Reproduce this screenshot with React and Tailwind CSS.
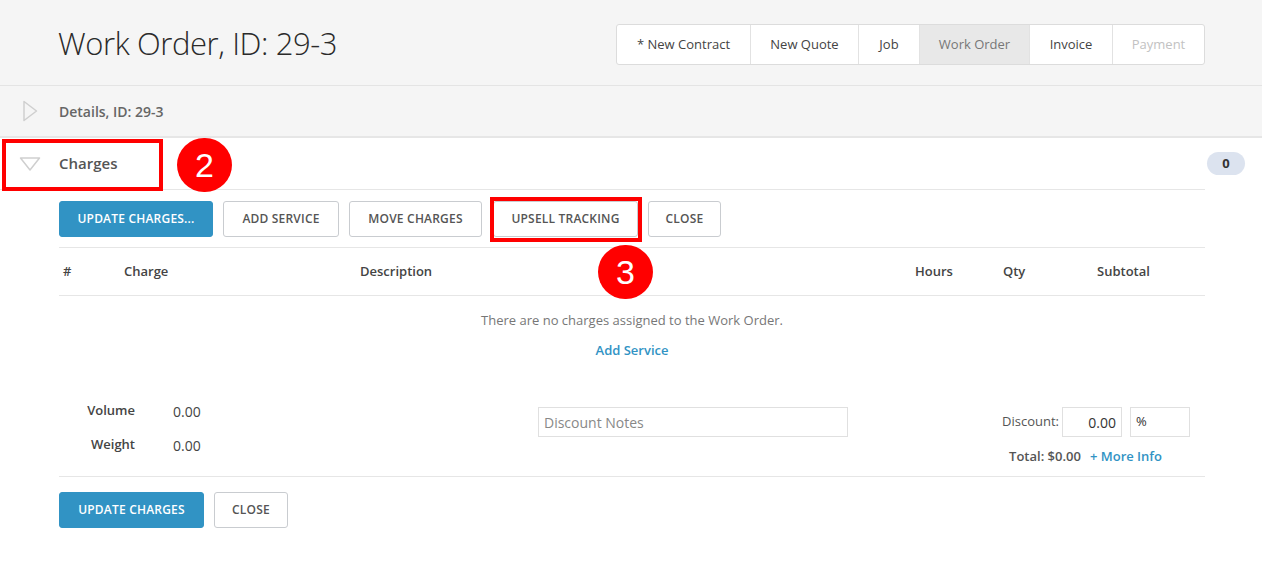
import React from "react";

const font = { fontFamily: '"Open Sans", "Liberation Sans", sans-serif' };

function Btn({ children, primary, className = "" }) {
  return (
    <button
      className={
        "h-9 rounded-[3px] px-4 text-[12px] font-semibold uppercase tracking-[0.2px] " +
        (primary
          ? "bg-[#3193c4] text-white border border-[#3193c4] "
          : "bg-white text-[#555] border border-[#c9ccd0] ") +
        className
      }
    >
      {children}
    </button>
  );
}

function Tab({ children, active, disabled, w }) {
  return (
    <div
      className={
        "flex items-center justify-center border-l border-[#e2e2e2] first:border-l-0 text-[13px] " +
        w +
        (active ? " bg-[#e8e8e8] text-[#777]" : disabled ? " text-[#c2c2c2]" : " text-[#444]")
      }
    >
      {children}
    </div>
  );
}

export default function App() {
  return (
    <div className="relative w-[1262px] h-[572px] bg-white text-[#444]" style={font}>
      {/* header */}
      <div className="h-[86px] bg-[#f5f5f5] border-b border-[#e4e4e4] flex items-center justify-between pl-[58px] pr-[57px]">
        <h1 className="text-[31px] font-light text-[#2a2a2a] tracking-[-0.4px] mt-[2px]">Work Order, ID: 29-3</h1>
        <div className="flex h-[41px] mt-[4px] bg-white border border-[#dcdcdc] rounded-[3px] overflow-hidden">
          <Tab w="w-[133px]">* New Contract</Tab>
          <Tab w="w-[108px]">New Quote</Tab>
          <Tab w="w-[61px]">Job</Tab>
          <Tab w="w-[110px]" active>Work Order</Tab>
          <Tab w="w-[83px]">Invoice</Tab>
          <Tab w="w-[92px]" disabled>Payment</Tab>
        </div>
      </div>

      {/* details row */}
      <div className="h-[52px] bg-[#f5f5f5] border-b-2 border-[#e6e6e6] flex items-center">
        <div className="w-[59px] flex justify-center pl-[1px]">
          <svg width="16" height="22" viewBox="0 0 16 22">
            <path d="M2 1.5 L14.5 11 L2 20.5 Z" fill="none" stroke="#cfcfcf" strokeWidth="1.5" strokeLinejoin="round" />
          </svg>
        </div>
        <span className="text-[14px] font-semibold text-[#666]">Details, ID: 29-3</span>
      </div>

      {/* charges row */}
      <div className="pr-[57px]">
        <div className="h-[52px] flex items-center border-b border-[#e6e6e6]">
          <div className="w-[59px] flex justify-center">
            <svg width="22" height="16" viewBox="0 0 22 16">
              <path d="M1.5 2 L20.5 2 L11 14 Z" fill="none" stroke="#cfcfcf" strokeWidth="1.5" strokeLinejoin="round" />
            </svg>
          </div>
          <span className="text-[15px] font-semibold text-[#555] flex-1">Charges</span>
          <span className="h-[23px] w-[38px] rounded-full bg-[#dce3ef] flex items-center justify-center text-[13px] font-bold text-[#333] mr-[-40px]">0</span>
        </div>
      </div>

      <div className="pl-[59px] pr-[57px]">
        <div className="flex gap-[10px] py-[10px] border-b border-[#e6e6e6] h-[58px] items-center">
          <Btn primary className="w-[154px] px-0">Update Charges...</Btn>
          <Btn className="w-[116px] px-0">Add Service</Btn>
          <Btn className="w-[133px] px-0">Move Charges</Btn>
          <Btn className="w-[145px] px-0 ml-[1px]">Upsell Tracking</Btn>
          <Btn className="w-[73px] px-0">Close</Btn>
        </div>

        {/* table header */}
        <div className="h-[48px] flex items-center border-b border-[#e6e6e6] text-[13px] font-semibold text-[#444]">
          <span className="w-[65px] pl-[4px]">#</span>
          <span className="w-[236px]">Charge</span>
          <span className="w-[555px]">Description</span>
          <span className="w-[88px]">Hours</span>
          <span className="w-[94px]">Qty</span>
          <span>Subtotal</span>
        </div>

        {/* empty */}
        <div className="flex flex-col items-center pt-[15px] h-[96px]">
          <p className="text-[13px] text-[#777] leading-[18px]">There are no charges assigned to the Work Order.</p>
          <a className="text-[13px] font-semibold text-[#3193c4] mt-[12px] leading-[18px]">Add Service</a>
        </div>

        {/* footer totals */}
        <div className="flex border-b border-[#e6e6e6] h-[85px]">
          <div className="w-[300px] pt-[10px] text-[13px]">
            <div className="flex items-center h-[18px]">
              <span className="w-[114px] text-right pr-[38px] font-semibold text-[#444]">Volume</span>
              <span className="text-[14px] text-[#444]">0.00</span>
            </div>
            <div className="flex items-center h-[18px] mt-[16px]">
              <span className="w-[114px] text-right pr-[38px] font-semibold text-[#444]">Weight</span>
              <span className="text-[14px] text-[#444]">0.00</span>
            </div>
          </div>
          <div className="w-[489px] pl-[179px] pt-[15px]">
            <div className="h-[30px] w-[310px] border border-[#e0e0e0] flex items-center px-[5px] text-[14px] text-[#888]">Discount Notes</div>
          </div>
          <div className="flex-1 flex flex-col items-end pr-[15px] pt-[15px]">
            <div className="flex items-center gap-[3px] text-[13px]">
              <span className="text-[#555]">Discount:</span>
              <span className="h-[30px] w-[60px] border border-[#e0e0e0] flex items-center justify-end pr-[5px] text-[14px] text-[#333]">0.00</span>
              <span className="h-[30px] w-[60px] border border-[#e0e0e0] flex items-center pl-[5px] text-[13px] text-[#333] ml-[5px]">%</span>
            </div>
            <div className="flex items-center gap-[9px] mt-[10px] text-[13px] font-semibold mr-[28px]">
              <span className="text-[#555]">Total: $0.00</span>
              <span className="text-[#3193c4]">+ More Info</span>
            </div>
          </div>
        </div>

        <div className="flex gap-[10px] pt-[15px]">
          <Btn primary className="w-[145px] px-0">Update Charges</Btn>
          <Btn className="w-[74px] px-0">Close</Btn>
        </div>
      </div>

      {/* annotations */}
      <div className="absolute left-[2px] top-[139px] w-[161px] h-[52px] border-[4px] border-[#ff0000]" />
      <div className="absolute left-[177px] top-[138px] w-[55px] h-[54px] rounded-full bg-[#ff0000] flex items-center justify-center text-white text-[34px]" style={{ fontFamily: '"Liberation Sans", sans-serif' }}>2</div>
      <div className="absolute left-[490px] top-[197px] w-[152px] h-[45px] border-[4px] border-[#ff0000]" />
      <div className="absolute left-[598px] top-[245px] w-[55px] h-[54px] rounded-full bg-[#ff0000] flex items-center justify-center text-white text-[34px]" style={{ fontFamily: '"Liberation Sans", sans-serif' }}>3</div>
    </div>
  );
}
